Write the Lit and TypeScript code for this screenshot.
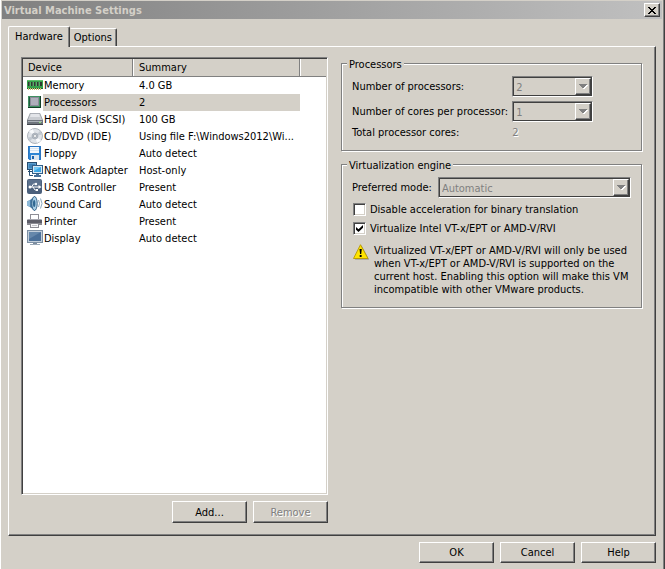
import { LitElement, html, css, svg, TemplateResult } from "lit";
import { customElement, property, state } from "lit/decorators.js";
import { classMap } from "lit/directives/class-map.js";

interface Device {
  name: string;
  summary: string;
  icon: TemplateResult;
}

const devices: Device[] = [
  {
    name: "Memory",
    summary: "4.0 GB",
    icon: svg`<rect x="0" y="3" width="16" height="8" fill="#35a04a"/><rect x="0" y="3" width="16" height="1" fill="#5fc06c"/>
      <path d="M1 5h2v4H1zM4 5h2v4H4zM7 5h2v4H7zM10 5h2v4h-2zM13 5h2v4h-2z" fill="#2c3a30"/>
      <path d="M3 5v4M6 5v4M9 5v4M12 5v4" stroke="#9ad8a0" stroke-width=".6"/>
      <path d="M0 11h16v1H0z" fill="#1f6c32"/>
      <path d="M1 11h1v2H1zM3 11h1v2H3zM5 11h1v2H5zM7 11h1v2H7zM9 11h1v2H9zM11 11h1v2h-1zM13 11h1v2h-1z" fill="#c8b86a"/>`,
  },
  {
    name: "Processors",
    summary: "2",
    icon: svg`<rect x="1" y="2" width="13" height="12" fill="#1d5c3c"/><rect x="1.500" y="2.500" width="11" height="10" fill="none" stroke="#3f8f62"/>
      <rect x="3" y="3" width="9" height="9" fill="#8c8c9a"/><rect x="4" y="4" width="7" height="7" fill="#aeaebb"/>
      <path d="M13.500 2v11.500H1" fill="none" stroke="#123f28"/>`,
  },
  {
    name: "Hard Disk (SCSI)",
    summary: "100 GB",
    icon: svg`<path d="M3 2h10l3 7v4H0V9z" fill="#8f959c"/><path d="M3.300 2.500h9.400L15 9H1z" fill="#c9ccd1"/>
      <path d="M4 3h8l1 3H3z" fill="#e3e5e9"/><path d="M0 9h16v4H0z" fill="#6f757d"/><path d="M1 10h14v1H1z" fill="#aab0b7"/>
      <path d="M12 11h2v1h-2z" fill="#8ce07a"/><path d="M0 13h16v1H0z" fill="#41464d"/>`,
  },
  {
    name: "CD/DVD (IDE)",
    summary: "Using file F:\\Windows2012\\Wi...",
    icon: svg`<circle cx="8" cy="8" r="7.500" fill="#dfe3e8" stroke="#9aa2ab" stroke-width=".8"/>
      <path d="M8 8L2 3.500A7 7 0 0 1 6 1.200zM8 8l6 4.500a7 7 0 0 1-4 2.300z" fill="#f8fafc"/>
      <path d="M8 8L1.200 9.500A7 7 0 0 0 3 13zM8 8l6.800-1.500A7 7 0 0 0 13 3z" fill="#c2c9d1"/>
      <circle cx="8" cy="8" r="3" fill="#b5bdc6" stroke="#a3abb4" stroke-width=".7"/><circle cx="8" cy="8" r="1.500" fill="#fff" stroke="#8a929b" stroke-width=".6"/>`,
  },
  {
    name: "Floppy",
    summary: "Auto detect",
    icon: svg`<path d="M1 1h13v14H2.500L1 13.500z" fill="#2f86d4"/><path d="M1.500 1.500h12v13H2.800L1.500 13.200z" fill="none" stroke="#2a74bf"/>
      <rect x="3" y="2" width="9" height="6" fill="#f4f8fc"/><path d="M3 3h9v1H3zM3 5h9v1H3z" fill="#d5e4f2"/>
      <rect x="4" y="10" width="8" height="5" fill="#dce6ef"/><rect x="5" y="11" width="2" height="3" fill="#1c62ab"/>`,
  },
  {
    name: "Network Adapter",
    summary: "Host-only",
    icon: svg`<rect x="0.500" y="0.500" width="9" height="7" fill="#5f9fce" stroke="#274d70"/><path d="M2 2h6v4H2z" fill="#3d83ba"/>
      <path d="M2.500 8v5.500H6M1 9.500h4" fill="none" stroke="#274d70"/>
      <rect x="5.500" y="3.500" width="10" height="8" fill="#d7e8f5" stroke="#315f89"/><rect x="7" y="5" width="7" height="5" fill="#3ba7e6"/>
      <path d="M7 5h7l-7 4z" fill="#75caf5"/><path d="M9 12h3v1H9zM7 13h7v2H7z" fill="#47709a"/>`,
  },
  {
    name: "USB Controller",
    summary: "Present",
    icon: svg`<rect x="0" y="0" width="15" height="15" rx="2" fill="#4a5f7b"/><path d="M1 1h13v6H1z" fill="#5c718d"/>
      <path d="M2 8h10M4.500 8l2-3h2M6 8l2 3h2" fill="none" stroke="#fff"/><circle cx="3" cy="8" r="1.500" fill="#fff"/>
      <path d="M11.500 6l3 2-3 2z" fill="#fff"/><circle cx="9" cy="5" r="1.200" fill="#fff"/><rect x="9" y="10" width="2" height="2" fill="#fff"/>`,
  },
  {
    name: "Sound Card",
    summary: "Auto detect",
    icon: svg`<path d="M0 5.500L3 4l5-4v15l-5-4-3-1.500z" fill="#4b7fa9"/><path d="M0 5.500L3 4v7L0 9.500z" fill="#8db9d8"/>
      <ellipse cx="7.500" cy="7.500" rx="2.700" ry="7" fill="#a9cfe6" stroke="#2c5a80" stroke-width=".9"/><ellipse cx="7.200" cy="7.500" rx="1.200" ry="3.500" fill="#2f6791"/>
      <path d="M11.500 4q2 3.500 0 7M13.500 2.500q3 5 0 10" fill="none" stroke="#7f9fb8" stroke-width=".9"/>`,
  },
  {
    name: "Printer",
    summary: "Present",
    icon: svg`<rect x="3.500" y="1.500" width="8" height="5" fill="#fff" stroke="#8e8e96"/><path d="M1 6h13l1 1v5H0V7z" fill="#8a8a92"/>
      <path d="M0 7h15v3H0z" fill="#5d5d68"/><path d="M1 6h13v1H1z" fill="#a5a5ae"/>
      <rect x="3.500" y="10.500" width="8" height="4" fill="#f6f6f8" stroke="#8a8a92"/><path d="M5 12.500h5" stroke="#c4c4ca"/>`,
  },
  {
    name: "Display",
    summary: "Auto detect",
    icon: svg`<rect x="0.500" y="0.500" width="15" height="12" fill="#c3cfdb" stroke="#7d90a4"/><rect x="2" y="2" width="12" height="9" fill="#4b7099"/>
      <path d="M2 2h12L2 9z" fill="#6688ab"/><path d="M6 13h4v1H6z" fill="#7b8b9c"/><path d="M3 14h10v1H3z" fill="#9aa9b8"/>`,
  },
];

@customElement("device-list")
class DeviceList extends LitElement {
  @state() private selected = "Processors";

  static styles = css`
    :host {
      display: block;
      box-sizing: border-box;
      background: #fff;
      border: 1px solid;
      border-color: #808080 #fff #fff #808080;
      box-shadow: inset 1px 1px #404040, inset -1px -1px #d4d0c8;
      padding: 1px;
    }
    table {
      width: 100%;
      border-collapse: collapse;
      table-layout: fixed;
    }
    .device {
      width: 110px;
    }
    .rest {
      width: 26px;
    }
    th {
      box-sizing: border-box;
      height: 17px;
      padding: 0 5px;
      background: #d4d0c8;
      border-bottom: 1px solid #808080;
      box-shadow: inset -1px 0 #808080, inset 1px 0 #fff;
      font-weight: normal;
      text-align: left;
    }
    th:first-child {
      box-shadow: inset -1px 0 #808080;
    }
    th:last-child {
      box-shadow: inset 1px 0 #fff;
    }
    td {
      height: 17px;
      padding: 0;
      white-space: nowrap;
      overflow: hidden;
    }
    .cell {
      display: flex;
      align-items: center;
      padding-left: 4px;
    }
    svg {
      flex: none;
      width: 16px;
      height: 16px;
    }
    .name {
      flex: 1;
      line-height: 17px;
      padding-left: 1px;
    }
    th.head,
    .summary {
      padding-left: 6px;
    }
    .selected .name,
    .selected .summary {
      background: #d4d0c8;
    }
  `;

  render() {
    return html`<table>
      <thead>
        <tr>
          <th class="device">Device</th>
          <th class="head">Summary</th>
          <th class="rest"></th>
        </tr>
      </thead>
      <tbody>
        ${devices.map(
          (d) => html`<tr
            class=${classMap({ selected: d.name === this.selected })}
            @click=${() => (this.selected = d.name)}
          >
            <td>
              <div class="cell">
                <svg viewBox="0 0 16 16" aria-hidden="true">${d.icon}</svg>
                <span class="name">${d.name}</span>
              </div>
            </td>
            <td class="summary">${d.summary}</td>
            <td></td>
          </tr>`
        )}
      </tbody>
    </table>`;
  }
}

@customElement("combo-box")
class ComboBox extends LitElement {
  @property() value = "";
  @property() label = "";

  static styles = css`
    :host {
      position: relative;
      display: block;
      box-sizing: border-box;
      height: 21px;
      background: #d4d0c8;
      border: 1px solid;
      border-color: #808080 #fff #fff #808080;
      box-shadow: inset 1px 1px #404040, inset -1px -1px #404040;
    }
    select {
      appearance: none;
      display: block;
      width: 100%;
      height: 19px;
      margin: 0;
      padding: 2px 20px 0 3px;
      border: 0;
      background: none;
      color: #808080;
      opacity: 1;
      font: inherit;
    }
    .arrow {
      position: absolute;
      top: 1px;
      right: 1px;
      bottom: 1px;
      display: grid;
      place-items: center;
      box-sizing: border-box;
      width: 16px;
      border: 1px solid;
      border-color: #fff #404040 #404040 #fff;
      box-shadow: inset -1px -1px #808080;
      pointer-events: none;
    }
    .arrow svg {
      width: 9px;
      height: 6px;
    }
  `;

  render() {
    return html`<select disabled aria-label=${this.label}>
        <option>${this.value}</option>
      </select>
      <span class="arrow">
        <svg viewBox="0 0 9 6" shape-rendering="crispEdges" aria-hidden="true">
          <path d="M1 1h8L5 6z" fill="#fff" />
          <path d="M0 0h8L4 5z" fill="#808080" />
        </svg>
      </span>`;
  }
}

@customElement("app-root")
class AppRoot extends LitElement {
  static styles = css`
    :host {
      display: flex;
      flex-direction: column;
      box-sizing: border-box;
      min-height: 100vh;
      padding: 1px 3px 6px 1px;
      background: #d4d0c8;
      border-left: 1px solid #fff;
      box-shadow: inset -1px 0 #404040, inset -2px 0 #808080;
      color: #000;
      font: 11px/13px "DejaVu Sans Condensed", "DejaVu Sans", sans-serif;
      cursor: default;
    }
    .titlebar {
      display: flex;
      align-items: center;
      justify-content: space-between;
      height: 18px;
      padding: 0 2px;
      background: linear-gradient(90deg, #808080, #c0c0c0);
      color: #d4d0c8;
    }
    h1 {
      margin: 0;
      padding-top: 2px;
      font: bold 11px/16px "DejaVu Sans Condensed", "DejaVu Sans", sans-serif;
    }
    button {
      box-sizing: border-box;
      width: 75px;
      height: 22px;
      margin: 0;
      padding: 0;
      background: #d4d0c8;
      border: 1px solid;
      border-color: #fff #404040 #404040 #fff;
      border-radius: 0;
      box-shadow: inset -1px -1px #808080;
      color: #000;
      font: inherit;
    }
    button:disabled {
      color: #808080;
      text-shadow: 1px 1px #fff;
    }
    .close {
      display: grid;
      place-items: center;
      width: 16px;
      height: 14px;
    }
    .close svg {
      width: 8px;
      height: 7px;
    }
    .tabs {
      display: flex;
      align-items: flex-end;
      height: 20px;
      margin: 7px 7px 0 6px;
    }
    .tabs button {
      width: auto;
      height: 18px;
      padding: 0 4px 0 3px;
      border-color: #fff #404040 transparent transparent;
      border-bottom: 0;
      border-top-right-radius: 2px;
      box-shadow: inset -1px 0 #808080;
    }
    .tabs .active {
      position: relative;
      z-index: 1;
      height: 21px;
      margin-bottom: -1px;
      padding: 0 6px 2px;
      border-left-color: #fff;
      border-radius: 2px 2px 0 0;
    }
    .panel {
      flex: 1;
      display: grid;
      grid-template-columns: 307fr 302fr;
      gap: 13px;
      box-sizing: border-box;
      margin: 0 6px 6px;
      padding: 10px 12px 12px;
      border: 1px solid;
      border-color: #fff #404040 #404040 #fff;
      box-shadow: inset -1px -1px #808080;
    }
    .left {
      display: flex;
      flex-direction: column;
      gap: 6px;
    }
    device-list {
      flex: 1;
    }
    .actions {
      display: flex;
      justify-content: flex-end;
      gap: 6px;
    }
    .footer {
      padding-right: 6px;
    }
    .footer button {
      height: 21px;
    }
    .right {
      display: flex;
      flex-direction: column;
      gap: 6px;
    }
    .group {
      position: relative;
      box-sizing: border-box;
      min-width: 0;
      margin: 0;
      border: 0;
      padding: 14px 12px 13px 11px;
    }
    .group::before {
      content: "";
      position: absolute;
      inset: 6px 1px 1px 0;
      border: 1px solid #808080;
      box-shadow: 1px 1px #fff, inset 1px 1px #fff;
      pointer-events: none;
    }
    legend {
      position: relative;
      z-index: 1;
      float: left;
      margin: -13px 0 0 -5px;
      padding: 0 2px;
      background: #d4d0c8;
    }
    .fields {
      clear: both;
      display: grid;
      grid-template-columns: auto 1fr;
      align-items: center;
      gap: 4px;
      padding-top: 5px;
    }
    .fields combo-box {
      width: 81px;
    }
    .total {
      color: #808080;
      text-shadow: 1px 1px #fff;
    }
    .mode {
      clear: both;
      display: flex;
      align-items: center;
      gap: 6px;
      padding-top: 5px;
    }
    .mode combo-box {
      flex: 1;
    }
    .check {
      display: flex;
      align-items: center;
      gap: 4px;
      height: 15px;
      margin-top: 4px;
      padding-left: 1px;
      white-space: nowrap;
    }
    input {
      appearance: none;
      display: grid;
      place-items: center;
      box-sizing: border-box;
      width: 13px;
      height: 13px;
      margin: 0;
      background: #fff;
      border: 1px solid;
      border-color: #808080 #fff #fff #808080;
      box-shadow: inset 1px 1px #404040, inset -1px -1px #d4d0c8;
    }
    input:checked::before {
      content: "";
      width: 7px;
      height: 7px;
      background: #000;
      clip-path: polygon(0 29%, 36% 62%, 100% 0, 100% 40%, 36% 100%, 0 68%);
    }
    .warning {
      display: flex;
      gap: 5px;
      margin: 8px 0 0;
      padding-left: 1px;
    }
    .warning svg {
      flex: none;
      width: 16px;
      height: 16px;
    }
    .warning span {
      flex: 1;
    }
  `;

  render() {
    return html`
      <header class="titlebar">
        <h1>Virtual Machine Settings</h1>
        <button class="close" aria-label="Close">
          <svg viewBox="0 0 8 7" shape-rendering="crispEdges" aria-hidden="true">
            <path d="M0 0h2v1h1v1h2V1h1V0h2v1H7v1H6v1H5v1h1v1h1v1h1v1H6V6H5V5H3v1H2v1H0V6h1V5h1V4h1V3H2V2H1V1H0z" />
          </svg>
        </button>
      </header>
      <nav class="tabs" role="tablist">
        <button class="active" role="tab" aria-selected="true">Hardware</button>
        <button role="tab" aria-selected="false">Options</button>
      </nav>
      <main class="panel">
        <section class="left">
          <device-list></device-list>
          <div class="actions">
            <button>Add...</button>
            <button disabled>Remove</button>
          </div>
        </section>
        <section class="right">
          <fieldset class="group">
            <legend>Processors</legend>
            <div class="fields">
              <span>Number of processors:</span>
              <combo-box label="Number of processors" value="2"></combo-box>
              <span>Number of cores per processor:</span>
              <combo-box label="Number of cores per processor" value="1"></combo-box>
              <span>Total processor cores:</span>
              <span class="total">2</span>
            </div>
          </fieldset>
          <fieldset class="group">
            <legend>Virtualization engine</legend>
            <div class="mode">
              <span>Preferred mode:</span>
              <combo-box label="Preferred mode" value="Automatic"></combo-box>
            </div>
            <label class="check">
              <input type="checkbox" />Disable acceleration for binary translation
            </label>
            <label class="check">
              <input type="checkbox" checked />Virtualize Intel VT-x/EPT or AMD-V/RVI
            </label>
            <p class="warning">
              <svg viewBox="0 0 16 16" aria-hidden="true">
                <path d="M8.500 1.500L16 15.500H2z" fill="#8a8a8a" />
                <path d="M7.500.700L15 14.500H.500z" fill="#ffe400" stroke="#b89a00" stroke-width=".9" stroke-linejoin="round" />
                <path d="M6.500 5h2.300l-.600 5H7.100zM6.700 11h1.900v2H6.700z" fill="#000" />
              </svg>
              <span
                >Virtualized VT-x/EPT or AMD-V/RVI will only be used when VT-x/EPT or AMD-V/RVI is
                supported on the current host. Enabling this option will make this VM incompatible
                with other VMware products.</span
              >
            </p>
          </fieldset>
        </section>
      </main>
      <footer class="actions footer">
        <button>OK</button>
        <button>Cancel</button>
        <button>Help</button>
      </footer>
    `;
  }
}
